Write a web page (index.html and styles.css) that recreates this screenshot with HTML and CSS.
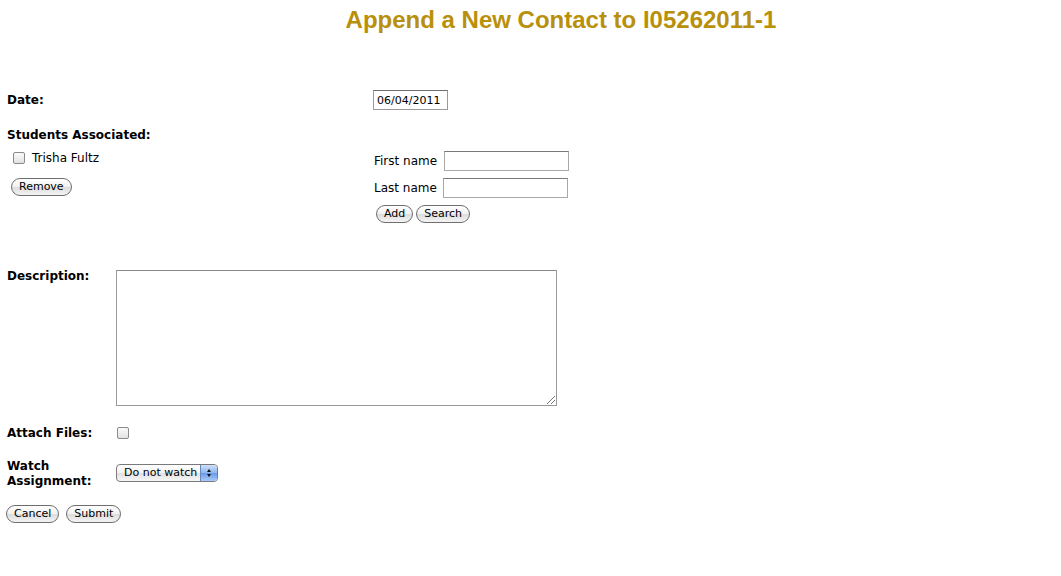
FILE: index.html
```html
<!DOCTYPE html>
<html>
<head>
<meta charset="utf-8">
<link rel="stylesheet" href="styles.css">
</head>
<body>
<h1 class="title">Append a New Contact to I05262011-1</h1>
<div class="top">
  <div class="row date-row">
    <div class="left"><span class="lbl">Date:</span></div>
    <div class="right"><input class="date-input" type="text" value="06/04/2011"></div>
  </div>
  <div class="row students-row">
    <div class="left">
      <div class="lbl students-lbl">Students Associated:</div>
      <label class="student"><span class="cb"></span><span>Trisha Fultz</span></label>
      <button class="btn remove-btn">Remove</button>
    </div>
    <div class="right search">
      <div class="name-line first"><span>First name</span><span class="txt"></span></div>
      <div class="name-line last"><span>Last name</span><span class="txt"></span></div>
      <div class="btns"><button class="btn">Add</button><button class="btn">Search</button></div>
    </div>
  </div>
</div>
<div class="lower">
  <div class="frow desc-row">
    <div class="flabel lbl">Description:</div>
    <div class="textarea"><span class="grip"></span></div>
  </div>
  <div class="frow attach-row">
    <div class="flabel lbl">Attach Files:</div>
    <span class="cb attach-cb"></span>
  </div>
  <div class="frow watch-row">
    <div class="flabel lbl">Watch<br>Assignment:</div>
    <div class="select"><span class="sel-text">Do not watch</span><span class="sel-arrow"><span class="up"></span><span class="down"></span></span></div>
  </div>
  <div class="actions"><button class="btn">Cancel</button><button class="btn">Submit</button></div>
</div>
</body>
</html>
```
FILE: styles.css
```css
html, body {
  margin: 0;
  padding: 0;
  background: #fff;
}
body {
  font-family: "DejaVu Sans", Verdana, sans-serif;
  font-size: 12px;
  color: #000;
  width: 1061px;
}
.title {
  margin: 0;
  padding-top: 6px;
  padding-left: 61px;
  text-align: center;
  font-family: "Liberation Sans", Arial, sans-serif;
  font-weight: bold;
  font-size: 24px;
  line-height: 28px;
  color: #b8900b;
}
.lbl {
  font-weight: bold;
  font-size: 12px;
}
.top {
  padding-top: 56px;
  padding-left: 7px;
}
.row {
  display: flex;
}
.left {
  width: 366px;
}
.date-row {
  align-items: center;
  height: 20px;
}
.date-input {
  box-sizing: border-box;
  width: 75px;
  height: 20px;
  margin: 0;
  padding: 0 0 0 3px;
  border: 1px solid #9a9a9a;
  border-top-color: #6f6f6f;
  font-family: "DejaVu Sans", Verdana, sans-serif;
  font-size: 11px;
  color: #000;
  outline: none;
}
.students-row {
  margin-top: 18px;
}
.students-lbl {
  line-height: 14px;
}
.student {
  display: flex;
  align-items: center;
  margin-top: 9px;
  padding-left: 6px;
  height: 14px;
}
.cb {
  display: inline-block;
  box-sizing: border-box;
  width: 12px;
  height: 12px;
  border: 1px solid #8a8a8a;
  border-radius: 2px;
  background: linear-gradient(#fafafa, #e2e2e2);
  margin-right: 7px;
}
.btn {
  box-sizing: border-box;
  height: 18px;
  margin: 0;
  padding: 0 7px;
  border: 1px solid #6e6e6e;
  border-radius: 9px;
  background: linear-gradient(#ffffff 0%, #f1f1f1 50%, #dcdcdc 51%, #f4f4f4 100%);
  font-family: "DejaVu Sans", Verdana, sans-serif;
  font-size: 11px;
  line-height: 16px;
  color: #000;
}
.remove-btn {
  display: block;
  margin-top: 13px;
  margin-left: 4px;
}
.search {
  padding-top: 23px;
}
.name-line {
  display: flex;
  align-items: center;
  height: 20px;
  padding-left: 1px;
}
.name-line.first .txt { margin-left: 7px; }
.name-line.last { margin-top: 7px; }
.name-line.last .txt { margin-left: 6px; }
.txt {
  box-sizing: border-box;
  width: 125px;
  height: 20px;
  border: 1px solid #a8a8a8;
  border-top-color: #7a7a7a;
  background: #fff;
}
.btns {
  display: flex;
  gap: 3px;
  margin-top: 7px;
  padding-left: 3px;
}
.lower {
  padding-left: 7px;
  padding-top: 47px;
}
.frow {
  display: flex;
}
.flabel {
  width: 109px;
  flex: none;
}
.desc-row .flabel {
  line-height: 12px;
}
.textarea {
  position: relative;
  box-sizing: border-box;
  width: 441px;
  height: 136px;
  border: 1px solid #999;
  border-top-color: #8a8a8a;
  background: #fff;
}
.grip {
  position: absolute;
  right: 1px;
  bottom: 1px;
  width: 8px;
  height: 8px;
  background: linear-gradient(135deg, transparent 45%, #777 46%, #777 52%, transparent 53%, transparent 70%, #777 71%, #777 77%, transparent 78%);
}
.attach-row {
  margin-top: 20px;
  align-items: center;
  height: 14px;
}
.attach-cb {
  margin-left: 1px;
}
.watch-row {
  margin-top: 19px;
}
.watch-row .flabel {
  line-height: 15px;
}
.select {
  display: flex;
  align-items: stretch;
  box-sizing: border-box;
  width: 102px;
  height: 18px;
  margin-top: 5px;
  border: 1px solid #7a7a7a;
  border-radius: 4px;
  overflow: hidden;
  background: linear-gradient(#ffffff 0%, #f2f2f2 50%, #e0e0e0 51%, #f6f6f6 100%);
}
.sel-text {
  flex: 1;
  font-size: 11px;
  line-height: 16px;
  padding-left: 7px;
}
.sel-arrow {
  width: 16px;
  display: flex;
  flex-direction: column;
  align-items: center;
  justify-content: center;
  gap: 2px;
  border-left: 1px solid #6c88b8;
  background: linear-gradient(#cfe0fb 0%, #8fb6ef 50%, #6a9ae6 51%, #a9cbf8 100%);
}
.up {
  width: 0; height: 0;
  border-left: 2.5px solid transparent;
  border-right: 2.5px solid transparent;
  border-bottom: 3px solid #111;
}
.down {
  width: 0; height: 0;
  border-left: 2.5px solid transparent;
  border-right: 2.5px solid transparent;
  border-top: 3px solid #111;
}
.actions {
  display: flex;
  gap: 7px;
  margin-top: 16px;
  margin-left: -1px;
}
```
